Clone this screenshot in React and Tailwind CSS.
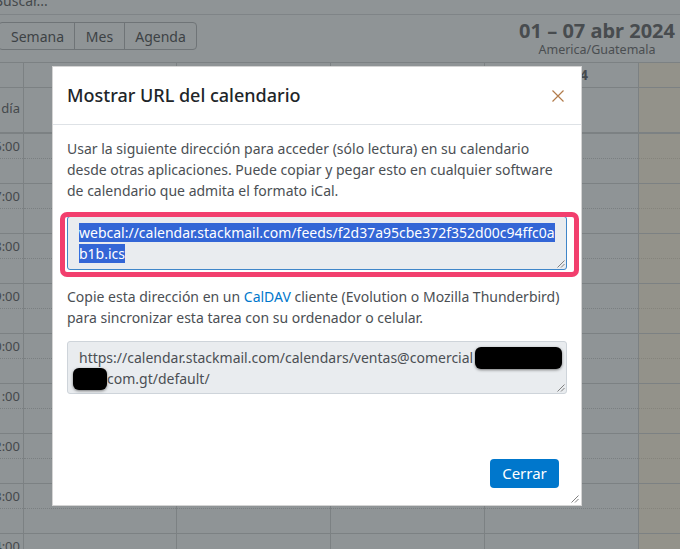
import React from 'react';

const hours = ['06:00', '07:00', '08:00', '09:00', '10:00', '11:00', '12:00', '13:00', '14:00'];

const Grip = ({ className }) => (
  <svg className={className} width="9" height="9" viewBox="0 0 9 9">
    <path d="M8.5 1.5 L1.5 8.5 M8.5 5 L5 8.5" stroke="#808080" strokeWidth="1" />
  </svg>
);

const Row = ({ children, className, cellClass = '' }) => {
  const cells = React.Children.toArray(children);
  return (
    <div className={`flex ${className}`}>
      <div className={`w-[24px] shrink-0 border-r border-[#7c8183] ${cellClass}`}>{cells[0]}</div>
      <div className={`w-[153px] shrink-0 border-r border-[#7c8183] ${cellClass}`}>{cells[1]}</div>
      <div className={`w-[154px] shrink-0 border-r border-[#7c8183] ${cellClass}`}>{cells[2]}</div>
      <div className={`w-[154px] shrink-0 border-r border-[#7c8183] ${cellClass}`}>{cells[3]}</div>
      <div className={`w-[154px] shrink-0 border-r border-[#7c8183] ${cellClass}`}>{cells[4]}</div>
      <div className={`flex-1 bg-[#93928a] ${cellClass}`}>{cells[5]}</div>
    </div>
  );
};

const HourRow = ({ label }) => (
  <div className="flex h-[50px] border-b border-[#7c8183]">
    {[24, 153, 154, 154, 154].map((w, i) => (
      <div
        key={i}
        className="shrink-0 border-r border-[#7c8183] flex flex-col"
        style={{ width: w }}
      >
        <div className="h-[25px] border-b border-dotted border-[#7a7f81] overflow-hidden">
          {i === 0 && (
            <div className="text-[13px] leading-[16px] text-[#45494c] text-right pr-[3px] pt-[4px] whitespace-nowrap -ml-[20px]">
              {label}
            </div>
          )}
        </div>
      </div>
    ))}
    <div className="flex-1 bg-[#93928a]">
      <div className="h-[25px] border-b border-dotted border-[#85847c]" />
    </div>
  </div>
);

const App = () => {
  return (
    <div className="relative w-[680px] h-[549px] overflow-hidden bg-[#8f9496] font-['Noto_Sans',sans-serif]">
      {/* search strip */}
      <div className="h-[15px] border-b border-[#7f8487] overflow-hidden">
        <div className="-mt-[10px] -ml-[6px] text-[14px] text-[#45494c]">Buscar...</div>
      </div>

      {/* toolbar */}
      <div className="flex justify-between items-start h-[47px]">
        <div className="mt-[7px] -ml-[2px] flex h-[28px] border border-[#6f7477] rounded-[4px] text-[14px] text-[#3d4245]">
          <div className="w-[76px] flex items-center pl-[12px] border-r border-[#6f7477]">Semana</div>
          <div className="w-[50px] flex items-center justify-center border-r border-[#6f7477]">Mes</div>
          <div className="w-[71px] flex items-center justify-center">Agenda</div>
        </div>
        <div className="text-center pr-[5px] pt-[4px]">
          <div className="text-[20px] leading-[24px] font-bold text-[#484c4f]">01 – 07 abr 2024</div>
          <div className="text-[12.5px] leading-[14px] text-[#4a4e51]">America/Guatemala</div>
        </div>
      </div>

      {/* calendar grid */}
      <div className="border-t border-[#7c8183]">
        <Row className="h-[25px] border-b border-[#7c8183]">
          <span />
          <span />
          <span />
          <span />
          <div className="text-center pl-[6px] text-[14px] font-bold text-[#45494c] leading-[24px]">jue 4/4</div>
          <span />
        </Row>
        <Row className="h-[46px] border-b-2 border-[#7c8183]">
          <div className="overflow-hidden h-full">
            <div className="text-[13px] text-[#45494c] whitespace-nowrap text-right pr-[3px] pt-[11px] -ml-[60px]">todo el día</div>
          </div>
          <span />
          <span />
          <span />
          <span />
          <span />
        </Row>
        {hours.map((h) => (
          <HourRow key={h} label={h} />
        ))}
      </div>

      {/* modal */}
      <div className="absolute left-[52px] top-[66px] w-[530px] h-[440px] bg-white border border-[#d4d4d4] flex flex-col">
        <div className="h-[58px] shrink-0 border-b border-[#dee2e6] flex items-center justify-between pl-[14px] pr-[17px]">
          <h5 className="text-[18px] font-medium text-[#212529]">Mostrar URL del calendario</h5>
          <svg width="12" height="12" viewBox="0 0 12 12">
            <path d="M0.5 0.5 L11.5 11.5 M11.5 0.5 L0.5 11.5" stroke="#b27b4b" strokeWidth="1.2" />
          </svg>
        </div>

        <div className="px-[14px] pt-[13px] text-[14px] leading-[21px] text-[#4b4f54]">
          <p>
            Usar la siguiente dirección para acceder (sólo lectura) en su calendario desde otras aplicaciones. Puede copiar y pegar esto en cualquier software de calendario que admita el formato iCal.
          </p>

          <div className="relative mt-[15px] h-[54px] bg-[#e9ecef] border border-[#3f86c9] rounded-[3px] pl-[11px] pt-[5px] text-[#fff] whitespace-nowrap">
            <span className="bg-[#3366d6]">webcal://calendar.stackmail.com/feeds/f2d37a95cbe372f352d00c94ffc0a</span>
            <br />
            <span className="bg-[#3366d6]">b1b.ics</span>
            <Grip className="absolute right-[1px] bottom-[1px]" />
          </div>

          <p className="mt-[16px]">
            Copie esta dirección en un <span className="text-[#0077cc]">CalDAV</span> cliente (Evolution o Mozilla Thunderbird) para sincronizar esta tarea con su ordenador o celular.
          </p>

          <div className="relative mt-[13px] h-[53px] bg-[#e9ecef] border border-[#ced4da] rounded-[3px] pl-[11px] pt-[5px] text-[#4b4f54] whitespace-nowrap">
            <div className="flex items-center h-[21px]">
              https://calendar.stackmail.com/calendars/ventas@comercial
              <span className="inline-block ml-[2px] w-[87px] h-[22px] bg-black rounded-[6px] shadow-[0_1px_3px_rgba(0,0,0,0.5)]" />
            </div>
            <div className="flex items-center h-[21px]">
              <span className="inline-block -ml-[6px] w-[34px] h-[22px] bg-black rounded-[6px] shadow-[0_1px_3px_rgba(0,0,0,0.5)]" />
              com.gt/default/
            </div>
            <Grip className="absolute right-[1px] bottom-[1px]" />
          </div>
        </div>

        <div className="mt-auto flex justify-end pr-[22px] pb-[17px]">
          <button className="w-[69px] h-[29px] bg-[#0077cc] rounded-[4px] text-white text-[15px]">Cerrar</button>
        </div>

        <Grip className="absolute right-[2px] bottom-[2px]" />

        {/* pink highlight annotation */}
        <div className="absolute left-[7px] top-[145px] w-[519px] h-[65px] border-[5px] border-[#f23f6e] rounded-[7px] pointer-events-none" />
      </div>
    </div>
  );
};

export default App;
